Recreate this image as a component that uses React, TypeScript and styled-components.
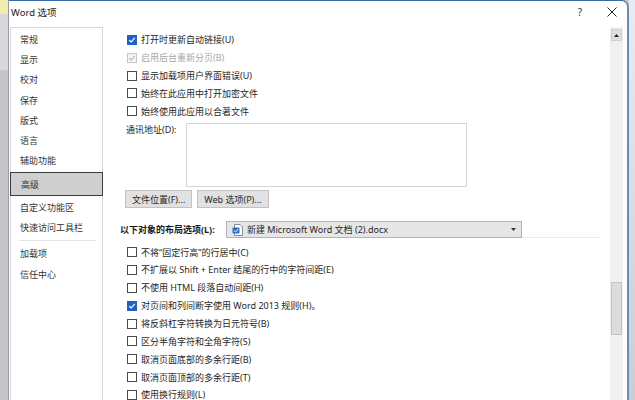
import React from "react";
import styled, { createGlobalStyle } from "styled-components";

type Option = {
  label: string;
  checked?: boolean;
  disabled?: boolean;
};

const topOptions: Option[] = [
  { label: "打开时更新自动链接(U)", checked: true },
  { label: "启用后台重新分页(B)", checked: true, disabled: true },
  { label: "显示加载项用户界面错误(U)" },
  { label: "始终在此应用中打开加密文件" },
  { label: "始终使用此应用以合著文件" },
];

const layoutOptions: Option[] = [
  { label: "不将“固定行高”的行居中(C)" },
  { label: "不扩展以 Shift + Enter 结尾的行中的字符间距(E)" },
  { label: "不使用 HTML 段落自动间距(H)" },
  { label: "对页间和列间断字使用 Word 2013 规则(H)。", checked: true },
  { label: "将反斜杠字符转换为日元符号(B)" },
  { label: "区分半角字符和全角字符(S)" },
  { label: "取消页面底部的多余行距(B)" },
  { label: "取消页面顶部的多余行距(T)" },
  { label: "使用换行规则(L)" },
];

const navItems = [
  "常规",
  "显示",
  "校对",
  "保存",
  "版式",
  "语言",
  "辅助功能",
  "高级",
  "自定义功能区",
  "快速访问工具栏",
  "|",
  "加载项",
  "信任中心",
];

export default function App() {
  return (
    <>
      <GlobalStyle />
      <Desktop>
        <BackSliver />
        <Dialog>
          <TitleBar>
            <Title>Word 选项</Title>
            <TitleButtons>
              <Help>?</Help>
              <svg width="10" height="10" viewBox="0 0 10 10">
                <path d="M0.5 0.5 L9.5 9.5 M9.5 0.5 L0.5 9.5" stroke="#222" strokeWidth="1" />
              </svg>
            </TitleButtons>
          </TitleBar>
          <Body>
            <Nav>
              {navItems.map((n, i) =>
                n === "|" ? (
                  <NavSep key={i} />
                ) : (
                  <NavItem key={i} $active={n === "高级"}>
                    {n}
                  </NavItem>
                )
              )}
            </Nav>
            <Content>
              {topOptions.map((o) => (
                <CheckRow key={o.label} option={o} />
              ))}
              <AddressRow>
                <AddressLabel>通讯地址(D):</AddressLabel>
                <AddressBox />
              </AddressRow>
              <ButtonRow>
                <Button>文件位置(F)...</Button>
                <Button>Web 选项(P)...</Button>
              </ButtonRow>
              <SectionRow>
                <SectionLabel>以下对象的布局选项(L):</SectionLabel>
                <Select>
                  <DocIcon />
                  <SelectText>新建 Microsoft Word 文档 (2).docx</SelectText>
                  <svg width="5" height="3" viewBox="0 0 5 3">
                    <path d="M0 0 L5 0 L2.5 3 Z" fill="#333" />
                  </svg>
                </Select>
                <SectionLine />
              </SectionRow>
              <LayoutList>
                {layoutOptions.map((o) => (
                  <CheckRow key={o.label} option={o} />
                ))}
              </LayoutList>
            </Content>
            <ScrollBar>
              <ScrollArrow>
                <svg width="5" height="3" viewBox="0 0 5 3">
                  <path d="M0 3 L5 3 L2.5 0 Z" fill="#222" />
                </svg>
              </ScrollArrow>
              <ScrollThumb />
            </ScrollBar>
          </Body>
        </Dialog>
        <RightSliver />
      </Desktop>
    </>
  );
}

function CheckRow({ option }: { option: Option }) {
  return (
    <Row $disabled={option.disabled}>
      <Box $checked={option.checked} $disabled={option.disabled}>
        {option.checked && (
          <svg width="8" height="8" viewBox="0 0 8 8">
            <path
              d="M1.2 4.2 L3.2 6 L6.8 1.8"
              stroke={option.disabled ? "#b8b8b8" : "#fff"}
              strokeWidth="1.2"
              fill="none"
            />
          </svg>
        )}
      </Box>
      <span>{option.label}</span>
    </Row>
  );
}

function DocIcon() {
  return (
    <svg width="12" height="12" viewBox="0 0 12 12">
      <path d="M2.5 0.5 H8 L10.5 3 V11.5 H2.5 Z" fill="#fff" stroke="#7a8da6" />
      <rect x="0.5" y="3.5" width="7" height="6" rx="1" fill="#2b6cc4" />
      <path d="M1.8 6.4 L3.6 8 L6.4 4.8" stroke="#fff" strokeWidth="1" fill="none" />
    </svg>
  );
}

const GlobalStyle = createGlobalStyle`
  html, body {
    margin: 0;
    padding: 0;
    overflow: hidden;
  }
  body {
    font-family: "Noto Sans", "Noto Sans CJK SC", sans-serif;
    font-size: 9px;
    color: #262626;
  }
`;

const Desktop = styled.div`
  display: flex;
  width: 635px;
  height: 400px;
  background: #c9ccd1;
  overflow: hidden;
`;

const BackSliver = styled.div`
  width: 8px;
  background: linear-gradient(#f3eeb0 0px, #f3eeb0 14px, #d6d8dc 14px, #d6d8dc 70px, #c4c6ca 70px);
`;

const RightSliver = styled.div`
  flex: 1;
  background: linear-gradient(#e8edf3, #c7ced8);
`;

const Dialog = styled.div`
  width: 621px;
  box-sizing: border-box;
  display: flex;
  flex-direction: column;
  background: #fff;
  border-top: 1px solid #3b6ca3;
  border-left: 1px solid #9a9a9a;
  border-right: 2px solid #6d8bad;
  border-top-right-radius: 7px;
`;

const TitleBar = styled.div`
  height: 21px;
  flex-shrink: 0;
  display: flex;
  align-items: center;
  justify-content: space-between;
  padding: 0 10px 0 2px;
`;

const Title = styled.div`
  font-size: 9.5px;
  color: #222;
`;

const TitleButtons = styled.div`
  display: flex;
  align-items: center;
  gap: 25px;
`;

const Help = styled.span`
  font-size: 10px;
  color: #333;
`;

const Body = styled.div`
  flex: 1;
  min-height: 0;
  overflow: hidden;
  display: flex;
  padding-right: 4px;
  margin-top: 5px;
`;

const Nav = styled.div`
  width: 93px;
  flex-shrink: 0;
  box-sizing: border-box;
  margin-left: 1px;
  border: 1px solid #d6d6d6;
  border-bottom: none;
  padding-top: 1px;
  display: flex;
  flex-direction: column;
`;

const NavItem = styled.div<{ $active?: boolean }>`
  height: ${(p) => (p.$active ? "24px" : "20.3px")};
  flex-shrink: 0;
  margin: ${(p) => (p.$active ? "1px -1px 1px -1px" : "0")};
  display: flex;
  align-items: center;
  padding-left: ${(p) => (p.$active ? "10px" : "9px")};
  box-sizing: border-box;
  color: #333;
  background: ${(p) => (p.$active ? "#cfcfcf" : "transparent")};
  border: ${(p) => (p.$active ? "1.5px solid #3c3c3c" : "none")};
`;

const NavSep = styled.div`
  height: 5px;
  flex-shrink: 0;
  margin: 0 6px 0 8px;
  border-top: 1px solid #e4e4e4;
  transform: translateY(2px);
`;

const Content = styled.div`
  flex: 1;
  padding-top: 4px;
  display: flex;
  flex-direction: column;
  overflow: hidden;
  & > * {
    flex-shrink: 0;
  }
`;

const Row = styled.div<{ $disabled?: boolean }>`
  height: 17.85px;
  flex-shrink: 0;
  display: flex;
  align-items: center;
  gap: 4px;
  padding-left: 24px;
  white-space: nowrap;
  color: ${(p) => (p.$disabled ? "#a6a6a6" : "#262626")};
`;

const Box = styled.div<{ $checked?: boolean; $disabled?: boolean }>`
  width: 10px;
  height: 10px;
  box-sizing: border-box;
  display: flex;
  align-items: center;
  justify-content: center;
  border: 1px solid
    ${(p) => (p.$disabled ? "#c6c6c6" : p.$checked ? "#1f62c4" : "#4a4a4a")};
  background: ${(p) =>
    p.$disabled ? "#f4f4f4" : p.$checked ? "#1f62c4" : "#fff"};
`;

const AddressRow = styled.div`
  display: flex;
  margin-top: 3px;
  padding-left: 23px;
`;

const AddressLabel = styled.div`
  width: 60px;
  line-height: 14px;
`;

const AddressBox = styled.div`
  width: 281px;
  height: 64px;
  box-sizing: border-box;
  border: 1px solid #d4d4d4;
`;

const ButtonRow = styled.div`
  display: flex;
  gap: 5px;
  margin-top: 3px;
  padding-left: 22px;
`;

const Button = styled.div`
  height: 18px;
  box-sizing: border-box;
  padding: 0 6px;
  display: flex;
  align-items: center;
  background: #e1e1e1;
  border: 1px solid #c2c2c2;
  color: #262626;
`;

const SectionRow = styled.div`
  display: flex;
  align-items: center;
  margin-top: 13px;
  padding-left: 17px;
`;

const SectionLabel = styled.div`
  width: 106px;
  font-weight: bold;
  color: #1a1a1a;
`;

const Select = styled.div`
  width: 296px;
  height: 17px;
  box-sizing: border-box;
  display: flex;
  align-items: center;
  gap: 3px;
  padding: 0 5px 0 5px;
  background: #e6e6e6;
  border: 1px solid #b3b3b3;
`;

const SelectText = styled.span`
  flex: 1;
  white-space: nowrap;
`;

const SectionLine = styled.div`
  width: 78px;
  align-self: flex-end;
  border-bottom: 1px solid #ececec;
`;

const LayoutList = styled.div`
  margin-top: 5px;
  display: flex;
  flex-direction: column;
`;

const ScrollBar = styled.div`
  width: 13px;
  flex-shrink: 0;
  background: #f0f0f0;
  display: flex;
  flex-direction: column;
  align-items: center;
`;

const ScrollArrow = styled.div`
  width: 11px;
  height: 12px;
  flex-shrink: 0;
  margin-top: 2px;
  box-sizing: border-box;
  display: flex;
  align-items: center;
  justify-content: center;
  background: #dedede;
  border: 1px solid #cfcfcf;
`;

const ScrollThumb = styled.div`
  width: 11px;
  height: 53px;
  flex-shrink: 0;
  margin-top: 241px;
  box-sizing: border-box;
  background: #dcdcdc;
  border: 1px solid #c4c4c4;
`;
